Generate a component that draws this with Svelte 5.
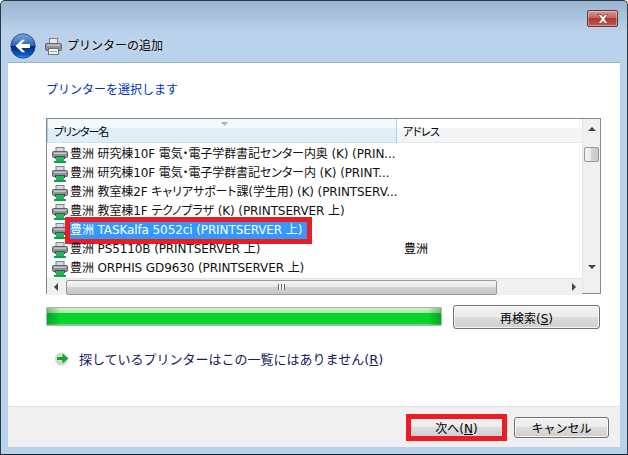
<script>
  const rows = [
    { name: '豊洲 研究棟10F 電気・電子学群書記センター内奥 (K) (PRIN...', addr: '' },
    { name: '豊洲 研究棟10F 電気・電子学群書記センター内 (K) (PRINT...', addr: '' },
    { name: '豊洲 教室棟2F キャリアサポート課(学生用) (K) (PRINTSERV...', addr: '' },
    { name: '豊洲 教室棟1F テクノプラザ (K) (PRINTSERVER 上)', addr: '' },
    { name: '豊洲 TASKalfa 5052ci (PRINTSERVER 上)', addr: '', selected: true },
    { name: '豊洲 PS5110B (PRINTSERVER 上)', addr: '豊洲' },
    { name: '豊洲 ORPHIS GD9630 (PRINTSERVER 上)', addr: '' }
  ];
</script>

{#snippet printer()}
  <svg class="row-icon" width="16" height="16" viewBox="0 0 16 16">
    <rect x="4" y="0.5" width="8" height="4" fill="#d8dadc" stroke="#7c8286" />
    <rect x="0.5" y="4.5" width="15" height="6" rx="1" fill="#8d9397" stroke="#5c6266" />
    <rect x="2" y="5.5" width="12" height="1.5" fill="#c4c8cb" />
    <rect x="3" y="9" width="10" height="3" fill="#4a4f53" />
    <rect x="4" y="10" width="8" height="5.5" fill="#27b45c" />
    <rect x="2" y="14" width="12" height="2" fill="#0fa14b" />
  </svg>
{/snippet}

<div class="window">
  <header class="caption">
    <div class="caption-top">
      <button class="close" aria-label="閉じる">
        <svg width="14" height="10" viewBox="0 0 14 10">
          <path d="M2 0.5h3l2 2.2 2-2.2h3l-3.4 4.5 3.4 4.5h-3l-2-2.2-2 2.2h-3l3.4-4.5z" fill="#f4f0ee" stroke="#7d3a32" stroke-width="0.7" />
        </svg>
      </button>
    </div>
    <div class="nav">
      <svg class="back" width="26" height="26" viewBox="0 0 26 26">
        <defs>
          <linearGradient id="backFill" x1="0" y1="0" x2="0" y2="1">
            <stop offset="0" stop-color="#7fa8dc" />
            <stop offset="0.48" stop-color="#2a63b8" />
            <stop offset="0.52" stop-color="#06296f" />
            <stop offset="0.85" stop-color="#0f56c4" />
            <stop offset="1" stop-color="#3c97ea" />
          </linearGradient>
        </defs>
        <circle cx="13" cy="13" r="12.2" fill="url(#backFill)" stroke="#1b3f7c" stroke-width="0.8" />
        <path d="M5.5 13l6.5-6.2h3.2l-4 4.2h8.8v4h-8.8l4 4.2h-3.2z" fill="#fff" />
      </svg>
      <svg class="title-icon" width="17" height="17" viewBox="0 0 17 17">
        <rect x="4.5" y="0.5" width="8" height="6" fill="#e6e8ea" stroke="#7d8387" />
        <rect x="0.5" y="5.5" width="16" height="7" rx="1.2" fill="#8b9195" stroke="#61676b" />
        <rect x="2" y="6.5" width="13" height="1.5" fill="#c2c6c9" />
        <rect x="3.5" y="10.5" width="10" height="6" fill="#f3f4f5" stroke="#6b7175" />
        <rect x="5" y="13" width="7" height="1" fill="#9aa0a4" />
      </svg>
      <span class="title">プリンターの追加</span>
    </div>
  </header>

  <main class="content">
    <div class="body">
      <h1>プリンターを選択します</h1>

      <div class="list">
        <div class="list-main">
          <div class="list-head">
            <div class="col-name">
              <svg class="sort" width="7" height="4" viewBox="0 0 7 4"><path d="M0 0h7L3.5 4z" fill="#9db4c8" /></svg>
              プリンター名
            </div>
            <div class="col-addr">アドレス</div>
          </div>
          <div class="rows">
            {#each rows as row}
              <div class="row">
                <div class="cell-name">
                  {@render printer()}
                  <span class="name" class:selected={row.selected}>{row.name}</span>
                </div>
                <div class="cell-addr">{row.addr}</div>
              </div>
            {/each}
          </div>
          <div class="hscroll">
            <span class="arrow-left"></span>
            <div class="hthumb"><span class="grip"></span></div>
            <span class="arrow-right"></span>
          </div>
        </div>
        <div class="vscroll">
          <span class="arrow-up"></span>
          <div class="vthumb"></div>
          <span class="arrow-down"></span>
        </div>
      </div>

      <div class="progress-row">
        <div class="progress"></div>
        <button class="btn research">再検索(<u>S</u>)</button>
      </div>

      <div class="link-row">
        <svg width="15" height="15" viewBox="0 0 15 15">
          <circle cx="6.5" cy="8" r="6.5" fill="#bdbdbd" opacity="0.7" />
          <path d="M1.5 5.5h5.5V1.8l7 5.7-7 5.7V9.5H1.5z" fill="#17a52c" stroke="#fff" stroke-width="0.6" />
        </svg>
        <span>探しているプリンターはこの一覧にはありません(<u>R</u>)</span>
      </div>
    </div>

    <footer class="footer">
      <button class="btn next">次へ(<u>N</u>)</button>
      <button class="btn">キャンセル</button>
    </footer>
  </main>
</div>

<style>
  :global(body) {
    margin: 0;
  }

  .window {
    width: 628px;
    height: 455px;
    box-sizing: border-box;
    display: flex;
    flex-direction: column;
    overflow: hidden;
    border: 1px solid #2a3a44;
    border-bottom-color: #123;
    border-top-left-radius: 5px;
    border-top-right-radius: 5px;
    background: linear-gradient(#9bb4d0 0, #b9d1ea 30px, #b9d1ea 100%);
    font-family: "DejaVu Sans", "Noto Sans CJK JP", sans-serif;
    font-size: 12px;
    color: #000;
  }

  .caption {
    height: 61px;
    flex: none;
  }

  .caption-top {
    display: flex;
    justify-content: flex-end;
    padding: 9px 9px 0 0;
    height: 16px;
  }

  .close {
    width: 31px;
    height: 17px;
    padding: 0;
    display: flex;
    align-items: center;
    justify-content: center;
    border: 1px solid #5a3a3c;
    border-radius: 2px;
    background: linear-gradient(#d89a8e 0, #c4655a 45%, #a93a30 50%, #c25a4c 100%);
    box-shadow: inset 0 0 0 1px rgba(255, 255, 255, 0.35);
  }

  .nav {
    display: flex;
    align-items: center;
    padding: 7px 0 0 9px;
    height: 26px;
  }

  .title-icon {
    margin-left: 9px;
  }

  .title {
    margin-left: 5px;
    margin-top: -4px;
    font-size: 12px;
    text-shadow: 0 0 6px rgba(255, 255, 255, 0.7);
  }

  .content {
    flex: 1;
    margin: 0 7px 7px 7px;
    min-height: 0;
    display: flex;
    flex-direction: column;
    background: #fff;
    border-top: 1px solid #9ab4cc;
  }

  .body {
    flex: 1;
    padding: 0 19px 0 38px;
  }

  h1 {
    margin: 17px 0 0 0;
    height: 20px;
    line-height: 20px;
    font-size: 12px;
    font-weight: 400;
    color: #0033bc;
  }

  .list {
    margin-top: 18px;
    height: 176px;
    box-sizing: border-box;
    display: flex;
    border: 1px solid #828790;
  }

  .list-main {
    flex: 1;
    min-width: 0;
    display: flex;
    flex-direction: column;
  }

  .list-head {
    height: 24px;
    flex: none;
    display: flex;
    line-height: 28px;
    font-size: 11px;
    font-feature-settings: "palt";
  }

  .col-name {
    position: relative;
    width: 342px;
    padding-left: 6px;
    letter-spacing: -1px;
    border-left: 1px solid #a8d4ea;
    border-right: 1px solid #a8d4ea;
    border-bottom: 1px solid #c8e4f2;
    background: linear-gradient(#f3f9fc 0, #f3f9fc 40%, #dfeef7 41%, #dfeef7 100%);
  }

  .sort {
    position: absolute;
    left: 173px;
    top: 3px;
  }

  .col-addr {
    flex: 1;
    padding-left: 6px;
    letter-spacing: -0.5px;
    border-bottom: 1px solid #e4e6e8;
    background: linear-gradient(#fff 0, #fff 40%, #f4f5f6 41%);
  }

  .rows {
    flex: 1;
    padding-top: 2px;
  }

  .row {
    height: 19px;
    display: flex;
    align-items: center;
  }

  .cell-name {
    width: 345px;
    padding-left: 5px;
    display: flex;
    align-items: center;
    white-space: nowrap;
    flex: none;
  }

  .row-icon {
    flex: none;
    margin-right: 2px;
  }

  .name {
    line-height: 17px;
    font-size: 12px;
    letter-spacing: -0.1px;
    color: #111;
    font-feature-settings: "palt";
  }

  .name.selected {
    background: #3399ff;
    color: #fff;
    padding-right: 5px;
    outline: 5px solid #ed1c24;
  }

  .cell-addr {
    padding-left: 7px;
    line-height: 17px;
  }

  .hscroll {
    height: 17px;
    flex: none;
    display: flex;
    align-items: center;
    background: #f0f0f0;
    border-top: 1px solid #e4e4e4;
    box-sizing: border-box;
  }

  .arrow-left {
    width: 0;
    height: 0;
    margin-left: 7px;
    border: 4px solid transparent;
    border-left: 0;
    border-right: 4px solid #444;
  }

  .hthumb {
    margin-left: 8px;
    width: 431px;
    height: 15px;
    box-sizing: border-box;
    border: 1px solid #989898;
    border-radius: 2px;
    background: linear-gradient(#f4f4f4 0, #e8e8e8 45%, #d2d2d2 50%, #c6c6c6 100%);
    display: flex;
    align-items: center;
    justify-content: center;
  }

  .grip {
    width: 7px;
    height: 6px;
    background: repeating-linear-gradient(90deg, #666 0, #666 1px, #f4f4f4 1px, #f4f4f4 3px);
  }

  .arrow-right {
    width: 0;
    height: 0;
    margin-left: 75px;
    border: 4px solid transparent;
    border-right: 0;
    border-left: 4px solid #444;
  }

  .vscroll {
    width: 18px;
    flex: none;
    display: flex;
    flex-direction: column;
    align-items: center;
    background: #f0f0f0;
    border-left: 1px solid #e6e6e6;
    box-sizing: border-box;
  }

  .arrow-up {
    margin-top: 8px;
    width: 0;
    height: 0;
    border: 4px solid transparent;
    border-top: 0;
    border-bottom: 4px solid #444;
  }

  .vthumb {
    margin-top: 16px;
    width: 15px;
    height: 15px;
    box-sizing: border-box;
    border: 1px solid #989898;
    border-radius: 2px;
    background: linear-gradient(90deg, #f4f4f4 0, #e8e8e8 45%, #d2d2d2 50%, #cacaca 100%);
  }

  .arrow-down {
    margin-top: auto;
    margin-bottom: 24px;
    width: 0;
    height: 0;
    border: 4px solid transparent;
    border-bottom: 0;
    border-top: 4px solid #444;
  }

  .progress-row {
    margin-top: 11px;
    display: flex;
    align-items: center;
    gap: 11px;
  }

  .progress {
    width: 396px;
    height: 19px;
    margin-top: -1px;
    box-sizing: border-box;
    border: 1px solid #b2b2b2;
    border-radius: 1px;
    background:
      linear-gradient(90deg, rgba(0, 90, 20, 0.35) 0, rgba(0, 90, 20, 0) 14px, rgba(0, 90, 20, 0) calc(100% - 14px), rgba(0, 90, 20, 0.35) 100%),
      linear-gradient(#cdf3c6 0, #a6e8a2 30%, #06d42a 32%, #06d42a 90%, #7fe08c 100%);
  }

  .btn {
    width: 95px;
    height: 21px;
    padding: 0;
    box-sizing: border-box;
    border: 1px solid #707070;
    border-radius: 3px;
    background: linear-gradient(#f2f2f2 0, #ebebeb 48%, #dddddd 50%, #cfcfcf 100%);
    box-shadow: inset 0 0 0 1px rgba(255, 255, 255, 0.8);
    font: inherit;
    color: #000;
  }

  .research {
    width: 147px;
    height: 24px;
  }

  .link-row {
    margin-top: 19px;
    margin-left: 9px;
    display: flex;
    align-items: center;
    gap: 9px;
    height: 20px;
    font-size: 13px;
    color: #15205c;
  }

  .footer {
    height: 41px;
    flex: none;
    box-sizing: border-box;
    border-top: 1px solid #dfdfdf;
    background: #f0f0f0;
    display: flex;
    justify-content: flex-end;
    align-items: center;
    gap: 10px;
    padding: 0 11px 0 0;
  }

  .next {
    border-radius: 0;
    outline: 5px solid #ed1c24;
    outline-offset: -2px;
    margin-top: 1px;
  }

  .footer .btn:last-child {
    margin-top: 1px;
  }
</style>
